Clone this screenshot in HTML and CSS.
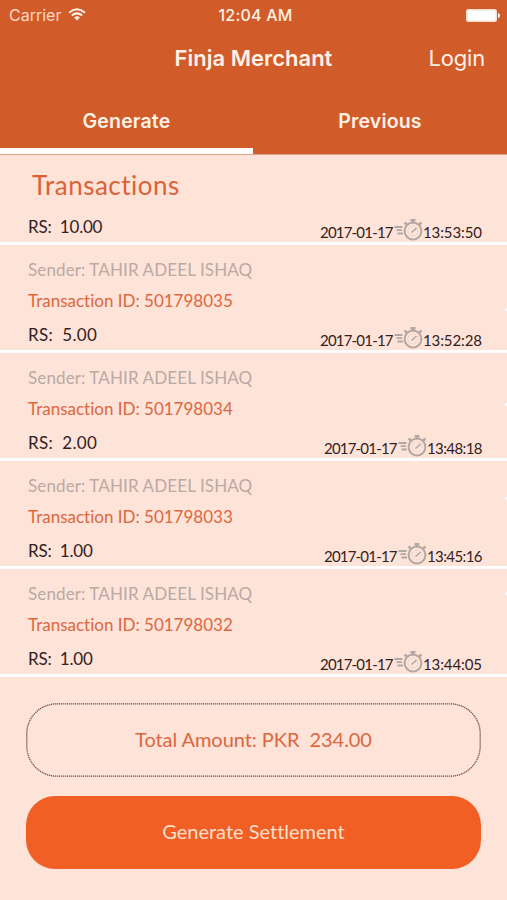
FILE: index.html
```html
<!DOCTYPE html>
<html lang="en">
<head>
<meta charset="utf-8">
<title>Finja Merchant</title>
<link rel="stylesheet" href="styles.css">
</head>
<body>
<svg class="defs" aria-hidden="true">
  <symbol id="timer" viewBox="0 0 29 24">
    <g fill="none" stroke="#b5a8a2" stroke-width="1.800">
      <path d="M.5 9h8M2.500 12.200h5.500M3.500 15.500h5.500"/>
      <circle cx="19" cy="13" r="8.400" stroke-width="2"/>
      <path d="M16.500 2.200h5M19 2v3.500" stroke-width="2.600"/>
      <path d="M10.500 4.500l2.800 2.500M27.500 4.500L24.700 7" stroke-width="2.400"/>
      <path d="M17.500 14.500l5-4.500" stroke-width="1.600"/>
      <circle cx="19" cy="13" r="5" stroke-width=".5" stroke-dasharray="1 1.500"/>
    </g>
  </symbol>
</svg>
<header class="header">
  <div class="status">
    <span class="left"><span class="carrier">Carrier</span>
    <svg class="wifi" viewBox="0 0 18 13" fill="none" stroke="#fff1e6" stroke-width="2"><path d="M1 4.700Q9-2.200 17 4.700M3.800 7.600Q9 3.200 14.200 7.600"/><path d="M9 12.500L6.100 9.500Q9 7.200 11.900 9.500Z" fill="#fff1e6" stroke="none"/></svg></span>
    <span class="clock">12:04 AM</span>
    <svg class="battery" viewBox="0 0 34 13" fill="#fff"><rect width="31" height="13" rx="2.500" fill="#ffdfcf"/><rect x="1.500" y="1.500" width="28" height="10" rx="1"/><path d="M32 4q2 .5 2 2.500t-2 2.500z"/></svg>
  </div>
  <div class="navbar"><h1 class="title">Finja Merchant</h1><a class="login">Login</a></div>
  <nav class="tabs"><a class="tab active">Generate</a><a class="tab">Previous</a></nav>
</header>
<main class="content">
  <h2 class="heading">Transactions</h2>
  <section class="list">
    <article class="item first"><div class="row"><span class="amount long">RS:&nbsp; 10.00</span><span class="when"><span class="date">2017-01-17</span><svg class="timer"><use href="#timer"/></svg><span class="time">13:53:50</span></span></div></article>
    <article class="item"><p class="sender">Sender: TAHIR ADEEL ISHAQ</p><p class="tid">Transaction ID: 501798035</p><div class="row"><span class="amount">RS:&nbsp; 5.00</span><span class="when"><span class="date">2017-01-17</span><svg class="timer"><use href="#timer"/></svg><span class="time">13:52:28</span></span></div></article>
    <article class="item"><p class="sender">Sender: TAHIR ADEEL ISHAQ</p><p class="tid">Transaction ID: 501798034</p><div class="row"><span class="amount">RS:&nbsp; 2.00</span><span class="when"><span class="date">2017-01-17</span><svg class="timer"><use href="#timer"/></svg><span class="time narrow">13:48:18</span></span></div></article>
    <article class="item"><p class="sender">Sender: TAHIR ADEEL ISHAQ</p><p class="tid">Transaction ID: 501798033</p><div class="row"><span class="amount one">RS:&nbsp; 1.00</span><span class="when"><span class="date">2017-01-17</span><svg class="timer"><use href="#timer"/></svg><span class="time narrow">13:45:16</span></span></div></article>
    <article class="item"><p class="sender">Sender: TAHIR ADEEL ISHAQ</p><p class="tid">Transaction ID: 501798032</p><div class="row"><span class="amount one">RS:&nbsp; 1.00</span><span class="when"><span class="date">2017-01-17</span><svg class="timer"><use href="#timer"/></svg><span class="time">13:44:05</span></span></div></article>
    <div class="edge"><i></i><i></i><i></i><i></i></div>
  </section>
  <div class="total">
    <svg class="outline" viewBox="0 0 455 74"><rect x=".8" y=".8" width="453.400" height="72.400" rx="30" fill="none" stroke="#6b4a3f" stroke-width="1.300" stroke-dasharray="1.200 .8"/></svg>
    <span>Total Amount: PKR&nbsp; 234.00</span>
  </div>
  <button class="settle">Generate Settlement</button>
</main>
</body>
</html>
```
FILE: styles.css
```css
* { box-sizing: border-box; }
body { margin: 0; width: 507px; height: 900px; overflow: hidden; background: #fee3d8; font-family: Lato, "Liberation Sans", sans-serif; font-variant-ligatures: none; }
h1, h2, p { margin: 0; font-weight: 400; }
.defs { position: absolute; width: 0; height: 0; }
.header { height: 155px; background: #d15c29; color: #fff1e6; font-family: Inter, "Liberation Sans", sans-serif; border-bottom: 1px solid #dda48c; }
.status { display: grid; grid-template-columns: 1fr auto 1fr; height: 30px; padding: 0 7px 0 9px; align-items: center; }
.left { display: flex; align-items: center; gap: 7px; }
.carrier { font-size: 16px; color: #ffd9c3; }
.wifi { width: 18px; height: 13px; margin-top: -2px; }
.clock { margin-left: 2px; font-size: 16px; font-weight: 500; letter-spacing: .2px; }
.battery { justify-self: end; width: 34px; height: 13px; }
.navbar { display: grid; grid-template-columns: 1fr auto 1fr; height: 56px; align-items: center; padding: 0 22px; }
.title { grid-column: 2; font-size: 22px; font-weight: 600; }
.login { justify-self: end; font-size: 22px; letter-spacing: -.2px; }
.tabs { display: grid; grid-template-columns: 253px 254px; height: 68px; }
.tab { display: flex; justify-content: center; padding-top: 22px; font-size: 19.5px; line-height: 26px; font-weight: 600; letter-spacing: .15px; }
.active { border-bottom: 6px solid #fff; }
.heading { height: 60px; padding: 12px 0 0 32px; font-size: 26px; line-height: 36px; color: #dc6236; letter-spacing: .5px; }
.list { position: relative; }
.edge { position: absolute; top: 93px; right: 0; display: grid; row-gap: 91.5px; }
.edge i { width: 2px; height: 3px; border-radius: 2px 0 0 2px; background: #fff; }
.item { height: 108px; padding: 14px 25px 0 28px; border-bottom: 3px solid #fff; font-size: 17px; }
.first { height: 30px; padding-top: 0; }
.sender, .tid { width: max-content; line-height: 22px; }
.sender { height: 31px; color: #b9aaa5; letter-spacing: .12px; }
.tid { height: 33px; color: #dd6740; }
.row { display: flex; justify-content: space-between; height: 27px; }
.amount { line-height: 24px; color: #33211d; letter-spacing: .3px; }
.long { letter-spacing: -.2px; }
.one { letter-spacing: -.2px; }
.when { display: flex; align-items: flex-start; line-height: 34px; font-size: 15px; color: #33211d; }
.date { width: 73px; letter-spacing: -.8px; white-space: nowrap; }
.time { width: 59px; letter-spacing: -.1px; white-space: nowrap; }
.narrow { width: 55px; letter-spacing: -.6px; }
.timer { width: 29px; height: 24px; margin: 3px 0 0 1px; }
.total { position: relative; display: flex; align-items: center; justify-content: center; width: 455px; height: 74px; margin: 26px 0 0 26px; padding-bottom: 3px; color: #dd6740; font-size: 20px; letter-spacing: -.06px; }
.outline { position: absolute; inset: 0; width: 455px; height: 74px; }
.settle { display: block; width: 455px; height: 73px; margin: 19px 0 0 26px; padding: 0 0 3px; border: 0; border-radius: 29px; background: #f15f24; color: #ffdfcb; font: 400 20px Lato, "Liberation Sans", sans-serif; font-variant-ligatures: none; }
```
